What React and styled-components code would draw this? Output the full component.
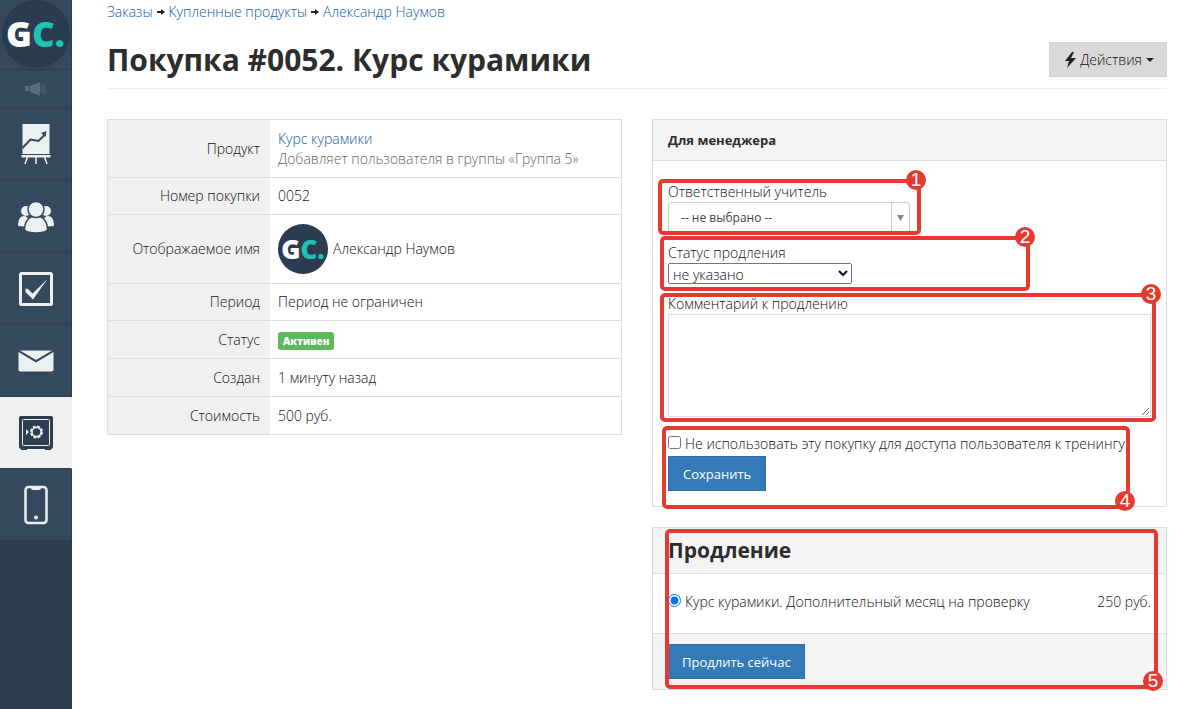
import React, { useState } from "react";
import styled, { createGlobalStyle } from "styled-components";

const menu = [
  { name: "Обучение", icon: "chart" },
  { name: "Пользователи", icon: "users" },
  { name: "Задачи", icon: "check" },
  { name: "Сообщения", icon: "mail" },
  { name: "Продажи", icon: "safe", active: true },
  { name: "Приложение", icon: "phone" },
];

const icons = {
  chart: (
    <svg width="36" height="44" viewBox="0 0 36 44">
      <path fill="#ecf0f1" d="M4.500 1h27v30h-27z" />
      <path fill="none" stroke="#34495e" strokeWidth="2" d="M4.500 25l8-8.500 8 1.500 7-7" />
      <path fill="#34495e" d="M23 10l5.500-2-1 6z" />
      <path fill="#ecf0f1" d="M3.500 32h29v2.500h-29z" />
      <path fill="none" stroke="#ecf0f1" strokeWidth="1.500" d="M9.500 34l-2.500 7M18 34v7M26.500 34l2.500 7" />
    </svg>
  ),
  users: (
    <svg width="36" height="32" viewBox="0 0 36 32">
      <g fill="#ecf0f1">
        <circle cx="8" cy="10" r="5" />
        <circle cx="28" cy="10" r="5" />
        <path d="M0 25c0-6 2-10 6-10s6 5 6 11zM36 25c0-6-2-10-6-10s-6 5-6 11z" />
      </g>
      <g fill="#ecf0f1" stroke="#34495e" strokeWidth="1.500">
        <path d="M6.500 29c0-8 4-14 11.500-14s11.500 6 11.500 14c-4 4-19 4-23 0z" />
        <circle cx="18" cy="8.500" r="8" />
      </g>
    </svg>
  ),
  check: (
    <svg width="36" height="36" viewBox="0 0 36 36">
      <rect x="2.500" y="2.500" width="31" height="31" rx="1" fill="none" stroke="#ecf0f1" strokeWidth="3" />
      <path fill="#ecf0f1" d="M7.500 17.500V21L15 28.500 29.500 8 14.500 22.500 10 18z" />
    </svg>
  ),
  mail: (
    <svg width="36" height="22" viewBox="0 0 36 22">
      <path fill="#ecf0f1" d="M2 .5h32L18 10z" />
      <path fill="#ecf0f1" d="M.5 2L18 12.500 35.500 2v17.500q0 2-2 2h-31q-2 0-2-2z" />
    </svg>
  ),
  safe: (
    <svg width="36" height="36" viewBox="0 0 36 36">
      <path fill="#2c3e50" d="M3 1h30q2 0 2 2v29q0 2-2 2v1h-6v-1H9v1H3v-1q-2 0-2-2V3q0-2 2-2z" />
      <rect x="4.500" y="4.500" width="27" height="26" rx="1" fill="none" stroke="#ecf0f1" />
      <circle cx="18.500" cy="17" r="4.500" fill="none" stroke="#ecf0f1" strokeWidth="1.500" />
      <circle cx="18.500" cy="17" r="5.500" fill="none" stroke="#ecf0f1" strokeWidth="2" strokeDasharray="3 1.300" />
      <path fill="#ecf0f1" d="M8 14l3 3-3 3z" />
    </svg>
  ),
  phone: (
    <svg width="26" height="40" viewBox="0 0 26 40">
      <rect x="2.500" y="2" width="21" height="36" rx="3" fill="none" stroke="#ecf0f1" strokeWidth="2.500" />
      <path fill="#ecf0f1" d="M8 2h10v1q0 2-2 2h-6q-2 0-2-2z" />
      <circle cx="13" cy="32.500" r="2" fill="#ecf0f1" />
    </svg>
  ),
};

const Arrow = () => (
  <svg width="8" height="8" viewBox="0 0 8 8">
    <path fill="#222" d="M0 3h4V1l4 3-4 3V5H0z" />
  </svg>
);

const Callout = ({ number, bottom, ...place }) => (
  <Frame {...place}>
    <Badge $bottom={bottom}>{number}</Badge>
  </Frame>
);

export default function App() {
  const [comment, setComment] = useState("");
  const [excluded, setExcluded] = useState(false);

  return (
    <>
      <GlobalStyle />
      <Page>
        <Sidebar>
          <LogoLink href="#">
            <Logo $size={68} $font={35}>
              G<span>C.</span>
            </Logo>
          </LogoLink>
          <NewsLink href="#" aria-label="Новости">
            <svg width="24" height="16" viewBox="0 0 24 16">
              <path fill="#566c81" d="M1 5h4v5H1zM6 5l10-4v14L6 11z" />
              <path fill="none" stroke="#4a6075" strokeWidth="1.500" d="M17 5q2 3 0 6M19 3q4 5 0 10" />
            </svg>
          </NewsLink>
          {menu.map((item) => (
            <MenuLink key={item.icon} href="#" aria-label={item.name} $active={item.active}>
              {icons[item.icon]}
            </MenuLink>
          ))}
        </Sidebar>

        <Content>
          <Breadcrumbs>
            <a href="#">Заказы</a>
            <Arrow />
            <a href="#">Купленные продукты</a>
            <Arrow />
            <a href="#">Александр Наумов</a>
          </Breadcrumbs>
          <Header>
            <h1>Покупка #0052. Курс курамики</h1>
            <ActionsButton type="button">
              <svg width="11" height="16" viewBox="0 0 11 16">
                <path fill="#222" d="M7 0L0 9h4l-2 7 9-10H6l3-6z" />
              </svg>
              Действия
              <svg width="8" height="4" viewBox="0 0 8 4">
                <path fill="#222" d="M0 0h8L4 4z" />
              </svg>
            </ActionsButton>
          </Header>

          <Columns>
            <Details>
              <tbody>
                <Row $height={58}>
                  <th scope="row">Продукт</th>
                  <td>
                    <a href="#">Курс курамики</a>
                    <Muted>Добавляет пользователя в группы «Группа 5»</Muted>
                  </td>
                </Row>
                <Row $height={37}>
                  <th scope="row">Номер покупки</th>
                  <td>0052</td>
                </Row>
                <Row $height={69}>
                  <th scope="row">Отображаемое имя</th>
                  <td>
                    <Person>
                      <Logo $size={50} $font={26}>
                        G<span>C.</span>
                      </Logo>
                      Александр Наумов
                    </Person>
                  </td>
                </Row>
                <Row $height={37}>
                  <th scope="row">Период</th>
                  <td>Период не ограничен</td>
                </Row>
                <Row $height={38}>
                  <th scope="row">Статус</th>
                  <td>
                    <Status>Активен</Status>
                  </td>
                </Row>
                <Row $height={38}>
                  <th scope="row">Создан</th>
                  <td>1 минуту назад</td>
                </Row>
                <Row $height={37}>
                  <th scope="row">Стоимость</th>
                  <td>500 руб.</td>
                </Row>
              </tbody>
            </Details>

            <Side>
              <Panel>
                <PanelHeader>
                  <h4>Для менеджера</h4>
                </PanelHeader>
                <ManagerForm>
                  <Field>
                    <label htmlFor="teacher">Ответственный учитель</label>
                    <Chosen>
                      <select id="teacher">
                        <option>-- не выбрано --</option>
                      </select>
                      <svg width="18" height="30" viewBox="0 0 18 30">
                        <path fill="none" stroke="#ccc" d="M.5 0v30" />
                        <path fill="#888" d="M6 12h7l-3.500 6z" />
                      </svg>
                    </Chosen>
                  </Field>
                  <Field>
                    <label htmlFor="status">Статус продления</label>
                    <StatusSelect id="status">
                      <option>не указано</option>
                    </StatusSelect>
                  </Field>
                  <Field>
                    <label htmlFor="comment">Комментарий к продлению</label>
                    <Comment
                      id="comment"
                      value={comment}
                      onChange={(e) => setComment(e.target.value)}
                    />
                  </Field>
                  <Choice>
                    <input
                      type="checkbox"
                      checked={excluded}
                      onChange={(e) => setExcluded(e.target.checked)}
                    />
                    <span>Не использовать эту покупку для доступа пользователя к тренингу</span>
                  </Choice>
                  <PrimaryButton type="button" $wide>
                    Сохранить
                  </PrimaryButton>
                </ManagerForm>
                <Callout number="1" $left={5} $top={59} $width={263} $height={56} />
                <Callout number="2" $left={7} $top={116} $width={370} $height={55} />
                <Callout number="3" $left={7} $top={173} $right={10} $height={129} />
                <Callout number="4" $left={9} $top={306} $width={468} $height={83} bottom />
              </Panel>

              <Panel>
                <PanelHeader>
                  <h3>Продление</h3>
                </PanelHeader>
                <Offer>
                  <Choice>
                    <input type="radio" name="offer" defaultChecked />
                    <span>Курс курамики. Дополнительный месяц на проверку</span>
                  </Choice>
                  <Price>250 руб.</Price>
                </Offer>
                <PanelFooter>
                  <PrimaryButton type="button">Продлить сейчас</PrimaryButton>
                </PanelFooter>
                <Callout number="5" $left={12} $top={1} $right={8} $height={160} bottom />
              </Panel>
            </Side>
          </Columns>
        </Content>
      </Page>
    </>
  );
}

const GlobalStyle = createGlobalStyle`
  * {
    box-sizing: border-box;
  }

  body {
    margin: 0;
    background: #fff;
    color: #111;
    font-family: "Open Sans", sans-serif;
    font-size: 14px;
    font-weight: 300;
    line-height: 20px;
  }

  h1, h3, h4 {
    margin: 0;
    color: #2d2d2d;
  }

  a {
    color: #1560a5;
    text-decoration: none;
  }

  svg {
    display: block;
    flex: none;
  }

  button, select, textarea {
    font: inherit;
  }
`;

const Page = styled.div`
  display: flex;
  min-height: 100vh;
`;

const Sidebar = styled.nav`
  flex: none;
  width: 72px;
  background: #2c3e50;
`;

const MenuLink = styled.a`
  display: flex;
  align-items: center;
  justify-content: center;
  height: 72px;
  background: ${(p) => (p.$active ? "#f0f0f0" : "#34495e")};
  border-right: 1px solid ${(p) => (p.$active ? "#f0f0f0" : "#2c3e50")};
  border-bottom: 1px solid #2c3e50;
`;

const LogoLink = styled(MenuLink)`
  align-items: flex-start;
  height: 70px;
`;

const NewsLink = styled(MenuLink)`
  height: 39px;
`;

const Logo = styled.div`
  flex: none;
  width: ${(p) => p.$size}px;
  height: ${(p) => p.$size}px;
  border-radius: 50%;
  background: #2b3c50;
  color: #fff;
  font: 800 ${(p) => p.$font}px/${(p) => p.$size}px "Open Sans", sans-serif;
  text-align: center;

  span {
    color: #1dc4b4;
  }
`;

const Content = styled.main`
  flex: 1;
  min-width: 0;
  padding: 2px 33px 18px 35px;
`;

const Breadcrumbs = styled.nav`
  display: flex;
  align-items: center;
  gap: 4px;
`;

const Header = styled.header`
  display: flex;
  align-items: center;
  justify-content: space-between;
  margin: 20px 0 30px;
  padding-bottom: 11px;
  border-bottom: 1px solid #eee;

  h1 {
    font-size: 30px;
    line-height: 34px;
  }
`;

const ActionsButton = styled.button`
  display: flex;
  align-items: center;
  gap: 4px;
  height: 35px;
  padding: 0 12px 0 15px;
  border: 1px solid #d4d4d4;
  background: #d9d9d9;
  color: #111;
  cursor: pointer;
`;

const Columns = styled.div`
  display: grid;
  grid-template-columns: minmax(0, 1fr) minmax(0, 1fr);
  align-items: start;
  gap: 30px;
`;

const Details = styled.table`
  width: 100%;
  border: 1px solid #ddd;
  border-collapse: separate;
  border-spacing: 0;
`;

const Row = styled.tr`
  height: ${(p) => p.$height}px;

  th,
  td {
    padding: 0 8px;
    border-bottom: 1px solid #ddd;
    text-align: left;
  }

  th {
    width: 162px;
    padding-right: 10px;
    background: #f0f0f0;
    font-weight: 300;
    text-align: right;
  }

  &:last-child > * {
    border-bottom: 0;
  }
`;

const Muted = styled.div`
  color: #666;
`;

const Person = styled.div`
  display: flex;
  align-items: center;
  gap: 5px;
`;

const Status = styled.span`
  display: inline-block;
  padding: 0 5px;
  border-radius: 3px;
  background: #5cb85c;
  color: #fff;
  font-size: 10px;
  font-weight: 800;
  line-height: 18px;
`;

const Side = styled.div`
  display: grid;
  gap: 20px;
`;

const Panel = styled.section`
  position: relative;
  border: 1px solid #ddd;
`;

const PanelHeader = styled.div`
  padding: 10px 15px;
  border-bottom: 1px solid #ddd;
  background: #f4f4f4;

  h4 {
    font-size: 13px;
    line-height: 20px;
  }

  h3 {
    font-size: 21px;
    line-height: 25px;
  }
`;

const ManagerForm = styled.form`
  padding: 21px 15px 15px;
`;

const Field = styled.div`
  display: flex;
  flex-direction: column;
  align-items: flex-start;
  margin-bottom: 10px;
`;

const Chosen = styled.div`
  display: flex;
  width: 242px;
  border: 1px solid #ccc;
  border-bottom: 0;
  border-radius: 4px 4px 0 0;

  select {
    flex: 1;
    min-width: 0;
    height: 30px;
    padding: 0 12px;
    border: 0;
    background: none;
    color: #444;
    font-size: 12px;
    font-weight: 400;
    appearance: none;
  }
`;

const StatusSelect = styled.select`
  width: 184px;
  height: 21px;
  color: #111;
`;

const Comment = styled.textarea`
  display: block;
  width: 100%;
  height: 103px;
  margin-bottom: 7px;
  border: 1px solid #ddd;
`;

const Choice = styled.label`
  display: flex;
  align-items: flex-start;
  gap: 4px;
  margin-bottom: 2px;
  white-space: nowrap;

  input {
    width: 13px;
    height: 13px;
    margin: 2px 0 0;
  }
`;

const PrimaryButton = styled.button`
  height: 35px;
  padding: 0 ${(p) => (p.$wide ? 14 : 13)}px;
  border: 1px solid #2e6da4;
  background: #337ab7;
  color: #fff;
  font-size: 13px;
  font-weight: 400;
  cursor: pointer;
`;

const Offer = styled.div`
  display: flex;
  justify-content: space-between;
  padding: 18px 15px 19px;
`;

const Price = styled.div`
  white-space: nowrap;
`;

const PanelFooter = styled.div`
  padding: 10px 15px;
  border-top: 1px solid #ddd;
  background: #f4f4f4;
`;

const Frame = styled.div`
  position: absolute;
  top: ${(p) => p.$top}px;
  left: ${(p) => p.$left}px;
  right: ${(p) => (p.$right === undefined ? "auto" : `${p.$right}px`)};
  width: ${(p) => (p.$width ? `${p.$width}px` : "auto")};
  height: ${(p) => p.$height}px;
  border: 4px solid #e53a30;
  border-radius: 5px;
  pointer-events: none;
`;

const Badge = styled.span`
  position: absolute;
  right: -9px;
  ${(p) => (p.$bottom ? "bottom: -6px;" : "top: -13px;")}
  width: 20px;
  height: 20px;
  border-radius: 50%;
  background: #e53a30;
  color: #fff;
  font: 19px/20px "Liberation Sans", sans-serif;
  text-align: center;
`;
